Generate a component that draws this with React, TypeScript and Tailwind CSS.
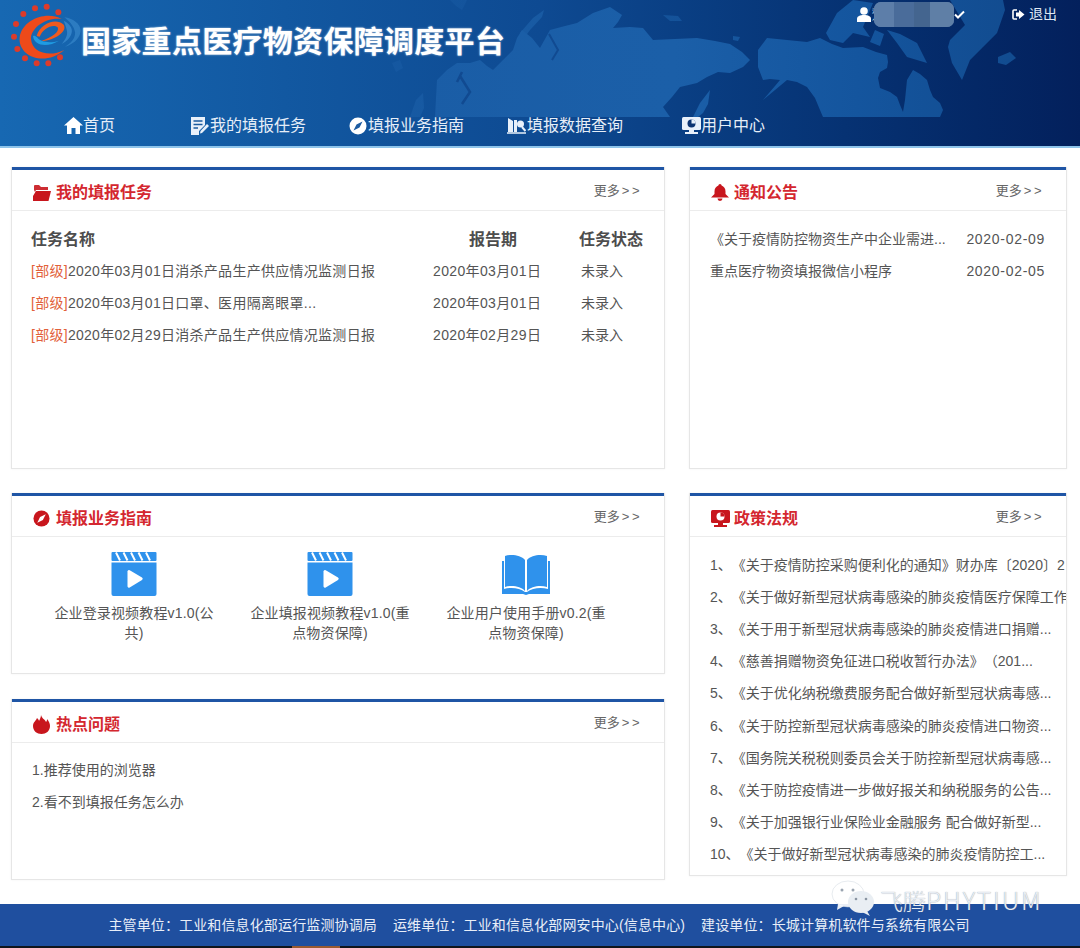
import React from "react";

const FONT = "[font-family:'Liberation_Sans','Noto_Sans_CJK_SC',sans-serif]";

function Logo() {
  const dots: [number, number][] = [[90,25],[125,20],[160,37],[55,42],[33,72],[27,110],[37,147],[60,175],[95,190],[130,190],[165,172]];
  return (
    <svg width="76" height="75" viewBox="0 0 228 225" className="shrink-0">
      <path d="M178 52 C205 55 232 75 226 98 C222 118 200 135 180 140 C200 128 212 112 210 96 C206 76 190 62 178 52Z" fill="#3f8fd2" opacity="0.55" />
      <path d="M176 62 C192 70 204 84 200 98 C196 114 184 124 170 132 C182 118 188 106 186 94 C184 82 180 72 176 62Z" fill="#3f8fd2" opacity="0.7" />
      {dots.map(([x, y], i) => <circle key={i} cx={x} cy={y} r="9" fill="#dd3b2a" />)}
      <path d="M170 57 C125 32 52 58 44 112 C38 172 122 200 178 150 C135 172 82 160 78 118 C76 85 122 50 170 57Z" fill="#ee4a1a" />
      <path d="M95 108 C105 72 152 52 176 74 C188 94 152 120 108 124 C144 110 164 96 158 82 C145 70 114 84 104 110Z" fill="#ef5a1e" />
      <path d="M84 108 C88 140 130 142 162 122 C136 130 108 128 96 112 C92 108 88 106 84 108Z" fill="#1f9be2" />
    </svg>
  );
}

function WorldMap() {
  return (
    <svg width="1080" height="117" viewBox="0 0 1080 117" className="absolute left-0 top-0">
      <defs>
        <linearGradient id="land" gradientUnits="userSpaceOnUse" x1="400" y1="0" x2="1010" y2="0">
          <stop offset="0" stopColor="#1a5da6" />
          <stop offset="0.45" stopColor="#1b5fa8" />
          <stop offset="0.75" stopColor="#14559e" />
          <stop offset="1" stopColor="#124c90" />
        </linearGradient>
      </defs>
      <g fill="url(#land)">
        <path d="M435 117 L437 80 L447 70 L457 63 L470 63 L480 60 L487 66 L493 70 L503 60 L513 50 L517 38 L522 30 L532 38 L540 48 L550 30 L565 26 L577 23 L585 18 L593 13 L610 7 L622 15 L618 22 L613 28 L630 27 L643 28 L653 40 L675 39 L697 38 L715 41 L730 44 L742 52 L750 60 L743 67 L730 73 L718 72 L707 77 L697 83 L680 87 L672 97 L663 107 L670 117Z" />
        <path d="M693 117 L700 103 L710 90 L708 104 L703 113 L698 117Z" />
        <path d="M410 117 L416 100 L423 93 L424 108 L420 117Z" opacity="0.7" />
        <path d="M520 33 L533 18 L544 10 L542 17 L530 30 L524 38Z" opacity="0.8" />
        <path d="M392 63 L400 60 L403 68 L396 72Z" opacity="0.5" />
        <path d="M450 0 L467 0 L462 10 L456 6Z" opacity="0.4" />
        <path d="M663 15 L678 16 L682 21 L670 21Z" opacity="0.6" />
        <path d="M733 36 L740 37 L738 41 L733 40Z" opacity="0.8" />

        <path d="M758 50 L767 38 L787 40 L807 42 L820 38 L832 44 L843 48 L863 47 L876 52 L887 55 L888 62 L887 68 L880 72 L878 78 L880 88 L890 92 L897 97 L900 105 L903 112 L905 100 L907 80 L913 70 L920 74 L927 80 L930 90 L933 97 L940 103 L943 110 L940 117 L823 117 L820 110 L815 98 L807 87 L797 82 L787 80 L775 90 L763 100 L775 86 L780 80 L770 79 L763 80 L758 67Z" />
        <path d="M826 33 L837 13 L853 0 L873 3 L863 27 L870 37 L853 33 L843 43 L830 40Z" />
        <path d="M887 30 L900 34 L917 43 L927 63 L907 57 L897 43Z" />
        <path d="M875 30 L884 34 L880 46 L870 42Z" />
        <path d="M950 40 L965 25 L950 0 L1003 0 L1005 10 L997 33 L983 47 L970 60 L962 80 L952 63 L948 47Z" />
        <path d="M998 57 L1010 52 L1016 58 L1006 65 L998 63Z" />
      </g>
      <path d="M457 82 L462 72 M460 76 L470 92 L462 104" stroke="#114a91" strokeWidth="2.5" fill="none" />
      <path d="M549 34 L558 50 L552 60" stroke="#114a91" strokeWidth="2" fill="none" />
    </svg>
  );
}

function NavItem({ icon, label, className }: { icon: React.ReactNode; label: string; className: string }) {
  return (
    <div className={`flex items-center text-[16px] text-[#e6eef8] ${className}`}>
      {icon}
      <span>{label}</span>
    </div>
  );
}

function Compass({ color, hole, size = 18 }: { color: string; hole: string; size?: number }) {
  return (
    <svg width={size} height={size} viewBox="0 0 18 18">
      <circle cx="9" cy="9" r="8.5" fill={color} />
      <path d="M13.5 4.5 L10.5 10.5 L4.5 13.5 L7.5 7.5Z" fill={hole} />
    </svg>
  );
}

function Card({ icon, title, children, className }: { icon: React.ReactNode; title: string; children: React.ReactNode; className: string }) {
  return (
    <section className={`overflow-hidden bg-white border border-[#e6e6e6] border-t-0 shadow-[0_0_2px_rgba(0,0,0,0.06)] ${className}`}>
      <div className="h-[3px] bg-[#1f55a5] -mx-px" />
      <div className="flex h-[41px] items-center border-b border-[#ececec] pl-[21px] pr-[22px] pt-[6px]">
        <div className="flex w-[20px] items-center -mt-[1px]">{icon}</div>
        <h2 className="ml-[3px] text-[16px] font-bold text-[#d4272f]">{title}</h2>
        <span className="ml-auto -mt-[4px] text-[13px] text-[#666]">更多<span className="ml-[2px] tracking-[2.5px]">&gt;&gt;</span></span>
      </div>
      {children}
    </section>
  );
}

function Task({ text, date }: { text: string; date: string }) {
  return (
    <div className="flex h-[32px] items-center text-[14px] text-[#555]">
      <div className="w-[402px] tracking-[0.28px]"><span className="text-[#e2613a]">[部级]</span>{text}</div>
      <div className="w-[148px] tracking-[0.36px]">{date}</div>
      <div>未录入</div>
    </div>
  );
}

function Film() {
  return (
    <svg width="46" height="44" viewBox="0 0 46 44">
      <rect x="0.5" y="0" width="45" height="9" rx="1" fill="#2f92ec" />
      <path d="M5 0.5 L9 8.5 M12.5 0.5 L16.5 8.5 M20 0.5 L24 8.5 M27.5 0.5 L31.5 8.5 M35 0.5 L39 8.5" stroke="#fff" strokeWidth="2" />
      <path d="M0.5 10.5 H45.5 V42 a2 2 0 0 1 -2 2 H2.5 a2 2 0 0 1 -2 -2Z" fill="#2f92ec" />
      <path d="M16.5 19.5 a1.5 1.5 0 0 1 2.2 -1.2 L31 25.5 a1.5 1.5 0 0 1 0 2.4 L18.7 35.5 a1.5 1.5 0 0 1 -2.2 -1.2Z" fill="#fff" />
    </svg>
  );
}

function Book() {
  return (
    <svg width="50" height="42" viewBox="0 0 50 42">
      <path d="M24 6 C20 1 10 0 4 2 V33 C10 31 20 32 24 37Z" fill="#2f92ec" />
      <path d="M26 6 C30 1 40 0 46 2 V33 C40 31 30 32 26 37Z" fill="#2f92ec" />
      <path d="M1 7 H3 V35 C10 33 19 34 24 38 H26 C31 34 40 33 47 35 V7 H49 V40 H28 L25 41 L22 40 H1Z" fill="#2f92ec" />
    </svg>
  );
}

function Guide({ icon, lines }: { icon: React.ReactNode; lines: string[] }) {
  return (
    <div className="flex w-[196px] flex-col items-center">
      <div className="flex h-[44px] items-end">{icon}</div>
      <div className="mt-[8px] text-center text-[14px] leading-[19.5px] tracking-[0.15px] text-[#555]">
        {lines.map((l) => <div key={l}>{l}</div>)}
      </div>
    </div>
  );
}

const policies: [string, string][] = [
  ["1、", "《关于疫情防控采购便利化的通知》财办库〔2020〕2"],
  ["2、", "《关于做好新型冠状病毒感染的肺炎疫情医疗保障工作"],
  ["3、", "《关于用于新型冠状病毒感染的肺炎疫情进口捐赠..."],
  ["4、", "《慈善捐赠物资免征进口税收暂行办法》（201..."],
  ["5、", "《关于优化纳税缴费服务配合做好新型冠状病毒感..."],
  ["6、", "《关于防控新型冠状病毒感染的肺炎疫情进口物资..."],
  ["7、", "《国务院关税税则委员会关于防控新型冠状病毒感..."],
  ["8、", "《关于防控疫情进一步做好报关和纳税服务的公告..."],
  ["9、", "《关于加强银行业保险业金融服务 配合做好新型..."],
  ["10、", "《关于做好新型冠状病毒感染的肺炎疫情防控工..."],
];

export default function App() {
  return (
    <div className={`relative h-[948px] w-[1080px] overflow-hidden bg-white ${FONT}`}>
      <header className="relative h-[148px] border-b-2 border-[#8ec4ea] bg-gradient-to-r from-[#1768b2] via-[#0e4a92] to-[#03205c]">
        <WorldMap />
        <div className="relative flex h-[117px] items-start">
          <div className="ml-[5px]"><Logo /></div>
          <h1 className="mt-[23px] text-[30px] font-bold leading-[38px] tracking-[0.3px] text-white [text-shadow:0_0_2px_rgba(255,255,255,0.7)]">国家重点医疗物资保障调度平台</h1>
          <div className="ml-auto mr-[23px] mt-[2px] flex h-[25px] items-center text-[13px] text-[#dfe8f4]">
            <svg width="14" height="15" viewBox="0 0 14 15"><circle cx="7" cy="4" r="3.8" fill="#fff" /><path d="M0 15 V12 C0 9 3 8 7 8 S14 9 14 12 V15Z" fill="#fff" /></svg>
            <span className="ml-[1px] w-[1px] text-[6px] leading-[7px]">湖<br />人</span>
            <div className="ml-[1px] flex h-[25px] w-[80px] overflow-hidden rounded-[7px] bg-[#5d7ea9]">
              <div className="h-full w-[20px] bg-[#5d7ea9]" />
              <div className="h-full w-[20px] bg-[#4a6c9a]" />
              <div className="h-full w-[16px] bg-[#44658f]" />
              <div className="h-full w-[24px] bg-[#5f7fa6]" />
            </div>
            <svg width="11" height="9" viewBox="0 0 11 9"><path d="M1 4.5 L4 7.5 L10 1.5" stroke="#fff" strokeWidth="2" fill="none" /></svg>
            <svg className="ml-[47px]" width="13" height="11" viewBox="0 0 13 11"><path d="M5 1 H2 a1 1 0 0 0 -1 1 V9 a1 1 0 0 0 1 1 H5" stroke="#fff" strokeWidth="1.6" fill="none" /><path d="M7 1 L12.5 5.5 L7 10 V7.5 H4 V3.5 H7Z" fill="#fff" /></svg>
            <span className="ml-[4px] text-[14px]">退出</span>
          </div>
        </div>
        <nav className="relative flex h-[29px] items-center -mt-[6px] pl-[64px]">
          <NavItem className="w-[126px]" label="首页" icon={<svg width="19" height="17" viewBox="0 0 19 17"><path d="M9.5 0 L19 8.5 H16 V17 H11.5 V11 H7.5 V17 H3 V8.5 H0Z" fill="#fff" /></svg>} />
          <NavItem className="w-[159px]" label="我的填报任务" icon={<svg className="mr-[1px]" width="19" height="18" viewBox="0 0 19 18"><path d="M1 0 H15 V8 L9 14 V18 H1Z" fill="#e8f0fa" /><path d="M3.5 4 H12.5 M3.5 7.5 H12.5 M3.5 11 H8" stroke="#1a5a9e" strokeWidth="1.5" /><path d="M17 7 L19 9 L12 16 L10 16.5 L10.5 14Z" fill="#e8f0fa" /></svg>} />
          <NavItem className="w-[158px]" label="填报业务指南" icon={<span className="mr-[1px] flex"><Compass color="#fff" hole="#1b5aa0" /></span>} />
          <NavItem className="w-[175px]" label="填报数据查询" icon={<svg className="mr-[1px]" width="19" height="16" viewBox="0 0 19 16"><path d="M1 0 L6 3 V14 H1Z M7 2 H10 V14 H7Z" fill="#e8f0fa" /><circle cx="13.5" cy="6" r="3.5" fill="#e8f0fa" /><path d="M15 9 L18.5 13" stroke="#e8f0fa" strokeWidth="2" /><path d="M0 15 H19" stroke="#e8f0fa" strokeWidth="1.5" /></svg>} />
          <NavItem className="" label="用户中心" icon={<svg width="19" height="18" viewBox="0 0 19 18"><rect x="0" y="0" width="19" height="13" rx="1.5" fill="#e8f0fa" /><circle cx="9.5" cy="6.5" r="4" fill="#0b3472" /><path d="M9.5 6.5 V2.5 A4 4 0 0 1 13.5 6.5Z" fill="#e8f0fa" /><rect x="7" y="13" width="5" height="2" fill="#e8f0fa" /><rect x="3" y="15" width="13" height="2" fill="#e8f0fa" /></svg>} />
        </nav>
      </header>

      <main className="flex gap-[24px] pl-[11px] pt-[19px]">
        <div className="flex w-[654px] flex-col">
          <Card
            className="h-[302px]"
            title="我的填报任务"
            icon={<svg width="18" height="16" viewBox="0 0 18 16"><path d="M1 5 V1 a1 1 0 0 1 1 -1 H6 L8 2 H15 V5 H3 L2 7Z" fill="#c8161d" opacity="0.9" /><path d="M3 6 H18 L15.5 16 H0 V11Z" fill="#c8161d" /></svg>}
          >
            <div className="px-[19px] pt-[14px]">
              <div className="flex h-[30px] items-center text-[16px] font-bold text-[#4d4d4d]">
                <div className="w-[438px]">任务名称</div>
                <div className="w-[110px]">报告期</div>
                <div>任务状态</div>
              </div>
              <Task text="2020年03月01日消杀产品生产供应情况监测日报" date="2020年03月01日" />
              <Task text="2020年03月01日口罩、医用隔离眼罩..." date="2020年03月01日" />
              <Task text="2020年02月29日消杀产品生产供应情况监测日报" date="2020年02月29日" />
            </div>
          </Card>

          <Card
            className="mt-[24px] h-[181px]"
            title="填报业务指南"
            icon={<Compass color="#c8161d" hole="#fff" size={17} />}
          >
            <div className="flex pl-[24px] pt-[15px]">
              <Guide icon={<Film />} lines={["企业登录视频教程v1.0(公", "共)"]} />
              <Guide icon={<Film />} lines={["企业填报视频教程v1.0(重", "点物资保障)"]} />
              <Guide icon={<Book />} lines={["企业用户使用手册v0.2(重", "点物资保障)"]} />
            </div>
          </Card>

          <Card
            className="mt-[25px] h-[181px]"
            title="热点问题"
            icon={<svg width="17" height="19" viewBox="0 0 17 19"><path d="M8 0 C9 4 12 4 13 7 C14 6 14 5 14 4 C16 6 17 9 17 11 C17 16 13 19 8.5 19 C4 19 0 16 0 11 C0 7 3 6 4 3 C5 4 6 5 6 6 C7 4 8 2 8 0Z" fill="#c8161d" /></svg>}
          >
            <div className="pl-[20px] pt-[11px] text-[14px] text-[#555]">
              <div className="flex h-[32px] items-center">1.推荐使用的浏览器</div>
              <div className="flex h-[32px] items-center">2.看不到填报任务怎么办</div>
            </div>
          </Card>
        </div>

        <div className="flex w-[378px] flex-col">
          <Card
            className="h-[302px]"
            title="通知公告"
            icon={<svg width="18" height="17" viewBox="0 0 18 17"><path d="M9 0 a1.6 1.6 0 0 1 1.6 1.6 C13 2.5 14.5 4.5 14.5 7.5 V10 L18 13.5 H0 L3.5 10 V7.5 C3.5 4.5 5 2.5 7.4 1.6 A1.6 1.6 0 0 1 9 0Z M6.5 14.5 H11.5 A2.5 2.5 0 0 1 6.5 14.5Z" fill="#c8161d" /></svg>}
          >
            <div className="pl-[20px] pr-[21px] pt-[12px] text-[14px] text-[#555]">
              <div className="flex h-[32px] items-center justify-between"><span>《关于疫情防控物资生产中企业需进...</span><span className="tracking-[0.7px]">2020-02-09</span></div>
              <div className="flex h-[32px] items-center justify-between"><span>重点医疗物资填报微信小程序</span><span className="tracking-[0.7px]">2020-02-05</span></div>
            </div>
          </Card>

          <Card
            className="mt-[24px] h-[383px]"
            title="政策法规"
            icon={<svg width="19" height="18" viewBox="0 0 19 18"><rect x="0" y="0" width="19" height="13" rx="1.5" fill="#c8161d" /><circle cx="9.5" cy="6.5" r="4" fill="#fff" /><path d="M9.5 6.5 V2.5 A4 4 0 0 1 13.5 6.5Z" fill="#c8161d" /><rect x="7" y="13" width="5" height="2" fill="#c8161d" /><rect x="3" y="15" width="13" height="2" fill="#c8161d" /></svg>}
          >
            <div className="pl-[20px] pt-[12px] text-[14px] text-[#555]">
              {policies.map(([n, p]) => (
                <div key={n} className="flex h-[32.2px] items-center whitespace-nowrap">
                  <span>{n}</span>
                  <span className="[text-spacing-trim:space-all]">{p}</span>
                </div>
              ))}
            </div>
          </Card>
        </div>
      </main>

      <footer className="absolute inset-x-0 top-[904px] flex h-[42px] items-start justify-center bg-[#1f4f9f] pr-[2px] pt-[11px] text-[14px] tracking-[0.13px] text-[#e8eef8]">
        主管单位：工业和信息化部运行监测协调局<span className="ml-[16px]">运维单位：工业和信息化部网安中心(信息中心)</span><span className="ml-[16px]">建设单位：长城计算机软件与系统有限公司</span>
      </footer>
      <div className="absolute inset-x-0 top-[946px] h-[2px] bg-[#10151c]" />
      <div className="absolute left-[292px] top-[946px] h-[2px] w-[48px] bg-[#9a5a30]" />

      <div className="absolute left-[830px] top-[880px] flex items-center">
        <svg width="46" height="38" viewBox="0 0 46 38">
          <ellipse cx="18" cy="14" rx="16" ry="13" fill="#fff" fillOpacity="0.9" stroke="#cfd6de" strokeWidth="0.5" />
          <path d="M8 24 L7 30 L14 26Z" fill="#fff" fillOpacity="0.9" />
          <circle cx="12" cy="10" r="1.5" fill="#9aa4b0" /><circle cx="23" cy="10" r="1.5" fill="#9aa4b0" />
          <ellipse cx="31" cy="22" rx="13" ry="11" fill="#e9eef3" />
          <path d="M37 31 L40 36 L32 32Z" fill="#e9eef3" />
          <circle cx="26" cy="19" r="1.3" fill="#8a95a2" /><circle cx="36" cy="19" r="1.3" fill="#8a95a2" />
        </svg>
        <span className="ml-[4px] flex items-baseline text-[#e8edf3] [font-family:'Noto_Sans_CJK_SC','Noto_Sans',sans-serif] [text-shadow:0_0_1px_rgba(110,120,140,0.8)]">
          <span className="text-[23px] font-light leading-[32px]">飞腾</span>
          <span className="text-[25px] font-light leading-[32px] tracking-[1.8px]">PHYTIUM</span>
        </span>
      </div>
    </div>
  );
}
